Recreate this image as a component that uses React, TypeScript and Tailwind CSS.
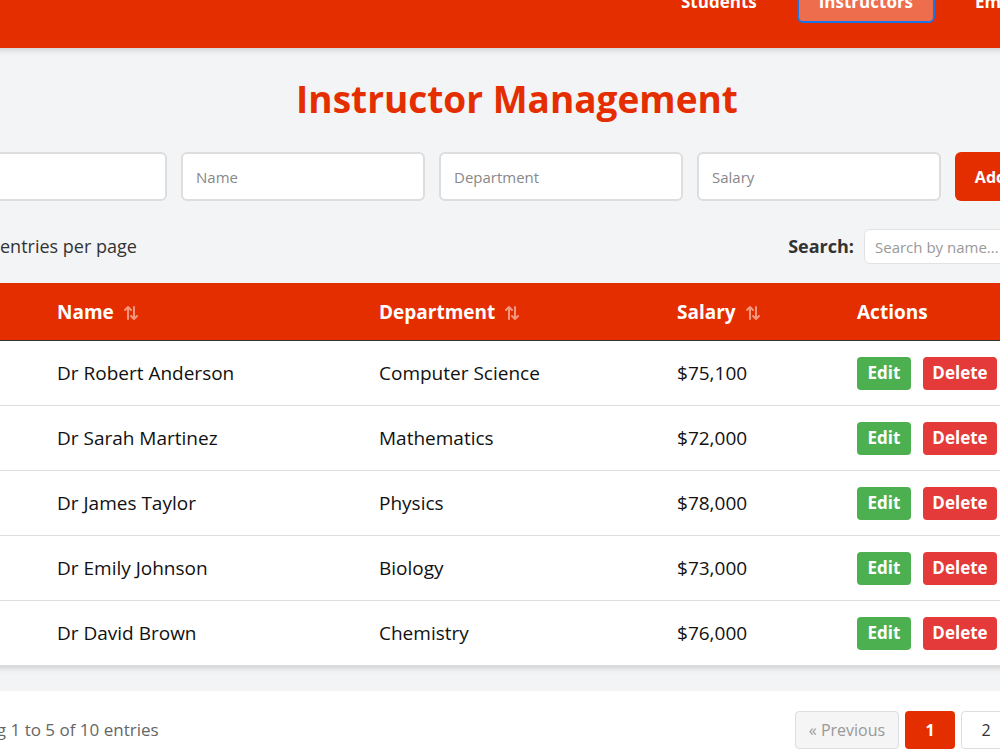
import { useState } from "react";

type Instructor = { id: number; name: string; department: string; salary: number };

const instructors: Instructor[] = [
  { id: 1, name: "Dr Robert Anderson", department: "Computer Science", salary: 75100 },
  { id: 2, name: "Dr Sarah Martinez", department: "Mathematics", salary: 72000 },
  { id: 3, name: "Dr James Taylor", department: "Physics", salary: 78000 },
  { id: 4, name: "Dr Emily Johnson", department: "Biology", salary: 73000 },
  { id: 5, name: "Dr David Brown", department: "Chemistry", salary: 76000 },
];

function SortIcon() {
  return (
    <svg viewBox="0 0 16 16" className="h-4 w-4 text-white/50" fill="none" stroke="currentColor" strokeWidth="2" strokeLinecap="round" strokeLinejoin="round">
      <path d="M5 14V2M2 5l3-3 3 3" />
      <path d="M11 2v12M8 11l3 3 3-3" />
    </svg>
  );
}

const cols = "grid grid-cols-[118px_322px_298px_180px_270px]";

export default function App() {
  const [search, setSearch] = useState("");

  return (
    <div className="h-[750px] w-[1000px] overflow-hidden bg-[#f3f4f6] font-['Open_Sans','Segoe_UI',sans-serif]">
      <div className="-ml-[200px] -mt-[30px] w-[1400px]">
        {/* nav */}
        <nav className="flex h-[78px] items-end bg-[#e52e00] pb-[25px] shadow-md">
          <ul className="ml-[859px] flex gap-[18px] text-[17px] font-bold text-white">
            <li className="rounded-md border-2 border-transparent px-5 pb-[9px] pt-[3px] leading-[21px]">Students</li>
            <li className="rounded-md border-2 border-[#1a73e8] bg-white/30 px-5 pb-[9px] pt-[3px] leading-[21px]">Instructors</li>
            <li className="rounded-md border-2 border-transparent px-5 pb-[9px] pt-[3px] leading-[21px]">Employees</li>
          </ul>
        </nav>

        <main className="ml-[123px] w-[1188px]">
          <h1 className="mt-[29px] text-center text-[37px] font-bold leading-[44px] text-[#e52e00]">
            Instructor Management
          </h1>

          <div className="mt-[31px] flex gap-[14px]">
            <input placeholder="ID" className="h-[49px] w-[244px] rounded-md border-2 border-[#dddddd] bg-white pl-[13px] text-[15px] placeholder:text-[#888]" />
            <input placeholder="Name" className="h-[49px] w-[244px] rounded-md border-2 border-[#dddddd] bg-white pl-[13px] text-[15px] placeholder:text-[#888]" />
            <input placeholder="Department" className="h-[49px] w-[244px] rounded-md border-2 border-[#dddddd] bg-white pl-[13px] text-[15px] placeholder:text-[#888]" />
            <input placeholder="Salary" className="h-[49px] w-[244px] rounded-md border-2 border-[#dddddd] bg-white pl-[13px] text-[15px] placeholder:text-[#888]" />
            <button className="h-[49px] flex-1 rounded-md bg-[#e52e00] text-[16px] font-bold text-white">Add Instructor</button>
          </div>

          <div className="mt-[28px] flex h-[35px] items-center justify-between text-[18px] text-[#333]">
            <div className="flex items-center">
              <div className="flex w-[77px] items-center gap-2">
                <span>Show</span>
              </div>
              <span>entries per page</span>
            </div>
            <div className="flex items-center gap-[10px]">
              <span className="font-bold">Search:</span>
              <input
                value={search}
                onChange={(e) => setSearch(e.target.value)}
                placeholder="Search by name..."
                className="h-[35px] w-[247px] rounded-md border border-[#e2e2e2] bg-white px-[10px] text-[15px] placeholder:text-[#999]"
              />
            </div>
          </div>

          <div className="mt-[19px] bg-white shadow-md">
            <div className={`${cols} h-[58px] items-center border-b border-[#333] bg-[#e52e00] pt-[2px] text-[19px] font-bold text-white`}>
              <div className="flex items-center gap-[9px] px-4">ID <SortIcon /></div>
              <div className="flex items-center gap-[9px] px-4">Name <SortIcon /></div>
              <div className="flex items-center gap-[9px] px-4">Department <SortIcon /></div>
              <div className="flex items-center gap-[9px] px-4">Salary <SortIcon /></div>
              <div className="px-4">Actions</div>
            </div>
            {instructors.map((r) => (
              <div key={r.id} className={`${cols} h-[65px] items-center border-b border-[#dddddd] text-[19px] text-[#111]`}>
                <div className="px-4">{r.id}</div>
                <div className="px-4">{r.name}</div>
                <div className="px-4">{r.department}</div>
                <div className="px-4">${r.salary.toLocaleString("en-US")}</div>
                <div className="flex gap-3 px-4">
                  <button className="h-[33px] w-[54px] rounded-[4px] bg-[#4caf50] text-[17px] font-bold text-white">Edit</button>
                  <button className="h-[33px] w-[74px] rounded-[4px] bg-[#e53a3a] text-[17px] font-bold text-white">Delete</button>
                </div>
              </div>
            ))}
          </div>

          <div className="mt-[25px] flex items-center justify-between bg-white px-4 py-5">
            <span className="text-[17px] text-[#666]">Showing 1 to 5 of 10 entries</span>
            <div className="flex gap-[6px] text-[16px]">
              <button className="h-[38px] w-[104px] rounded-[4px] border border-[#dddddd] bg-[#f5f5f5] text-[#999]">« Previous</button>
              <button className="h-[38px] w-[50px] rounded-[4px] bg-[#e52e00] font-bold text-white">1</button>
              <button className="h-[38px] w-[50px] rounded-[4px] border border-[#dddddd] bg-white text-[#333]">2</button>
              <button className="h-[38px] w-[78px] rounded-[4px] border border-[#dddddd] bg-white text-[#333]">Next »</button>
            </div>
          </div>
        </main>
      </div>
    </div>
  );
}
